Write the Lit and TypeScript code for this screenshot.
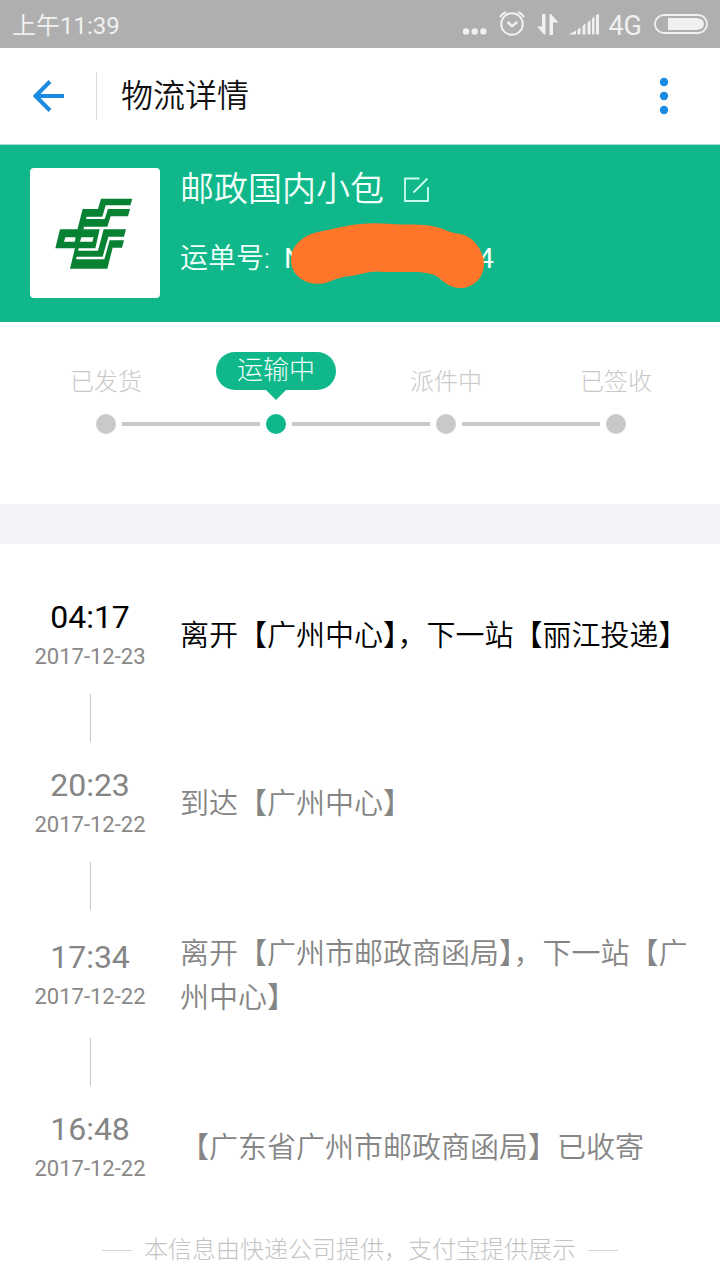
import { LitElement, html, css, nothing } from "lit";
import { customElement, property } from "lit/decorators.js";

interface TrackEvent {
  time: string;
  date: string;
  text: string;
}

const STEPS = ["已发货", "运输中", "派件中", "已签收"];
const ACTIVE_STEP = 1;

const EVENTS: TrackEvent[] = [
  { time: "04:17", date: "2017-12-23", text: "离开【广州中心】，下一站【丽江投递】" },
  { time: "20:23", date: "2017-12-22", text: "到达【广州中心】" },
  { time: "17:34", date: "2017-12-22", text: "离开【广州市邮政商函局】，下一站【广州中心】" },
  { time: "16:48", date: "2017-12-22", text: "【广东省广州市邮政商函局】已收寄" },
];

@customElement("status-bar")
export class StatusBar extends LitElement {
  static styles = css`
    :host {
      display: flex;
      align-items: center;
      justify-content: space-between;
      height: 48px;
      padding: 0 12px;
      background: #afafaf;
      color: #f0f0f0;
      font-size: 24px;
      line-height: 48px;
    }
    .clock {
      padding-top: 4px;
    }
    .icons {
      display: flex;
      align-items: center;
    }
    .icons svg {
      display: block;
    }
    .network {
      padding: 4px 12px 0 8px;
      font-size: 27px;
    }
  `;

  render() {
    return html`
      <span class="clock">上午11:39</span>
      <div class="icons">
        <svg width="146" height="48" viewBox="0 0 146 48" fill="#f0f0f0" aria-hidden="true">
          <circle cx="12" cy="31.5" r="3.2" />
          <circle cx="20.700" cy="31.5" r="3.2" />
          <circle cx="29.400" cy="31.5" r="3.2" />
          <g fill="none" stroke="#f0f0f0" stroke-width="2">
            <circle cx="58" cy="24" r="10.8" />
            <path d="M53.5 22l4.500 4.2 5.2-4.200" stroke-width="2.4" />
            <path d="M46 17q2-3.500 6-5M70 17q-2-3.500-6-5" stroke-width="2.200" />
          </g>
          <path d="M88 14h3.500v20.500h-1.500L83 26.500h5zM99 35h-3.500V14h1.500l7.500 8.500H99z" />
          <path d="M114.500 34.500l7.500-4v4zM123.500 29.500l3-2v7h-3zM128.500 26l3-2.500v11h-3zM133.500 22.500l3-2.500v14.500h-3zM138 18.500l2.500-2v18H138zM142 15.500l3-2v21h-3z" />
        </svg>
        <span class="network">4G</span>
        <svg width="54" height="20" viewBox="0 0 54 20" aria-hidden="true">
          <rect x="1" y="1" width="52" height="18" rx="9" fill="none" stroke="#f0f0f0" stroke-width="1.800" />
          <path d="M14 4h29q7 1 7 6t-7 6H14z" fill="#f0f0f0" />
        </svg>
      </div>
    `;
  }
}

@customElement("title-bar")
export class TitleBar extends LitElement {
  static styles = css`
    :host {
      display: flex;
      align-items: center;
      height: 96px;
      background: #fff;
      border-bottom: 1px solid #a6dccb;
    }
    button {
      display: flex;
      align-items: center;
      justify-content: center;
      width: 96px;
      height: 96px;
      padding: 0;
      border: 0;
      background: none;
    }
    .more {
      width: 112px;
    }
    h1 {
      flex: 1;
      margin: 0;
      padding-left: 24px;
      border-left: 1px solid #dcdcdc;
      color: #111;
      font-size: 32px;
      font-weight: 350;
      line-height: 48px;
    }
  `;

  render() {
    return html`
      <button aria-label="返回">
        <svg width="32" height="32" viewBox="0 0 32 32" fill="none" stroke="#1a8be0" stroke-width="4" aria-hidden="true">
          <path d="M18 1.500L3.500 16 18 30.500M3.500 16H32" />
        </svg>
      </button>
      <h1>物流详情</h1>
      <button class="more" aria-label="更多">
        <svg width="10" height="38" viewBox="0 0 10 38" fill="#1a8be0" aria-hidden="true">
          <circle cx="5" cy="5" r="4.200" />
          <circle cx="5" cy="19" r="4.200" />
          <circle cx="5" cy="33" r="4.200" />
        </svg>
      </button>
    `;
  }
}

@customElement("parcel-card")
export class ParcelCard extends LitElement {
  static styles = css`
    :host {
      display: flex;
      gap: 20px;
      padding: 23px 30px 24px;
      background: #0fb78a;
      color: #f2fffb;
    }
    .logo {
      flex: none;
      width: 130px;
      height: 130px;
      border-radius: 4px;
      background: #fff;
    }
    .logo svg {
      display: block;
    }
    .info {
      flex: 1;
    }
    .carrier {
      display: flex;
      align-items: center;
      gap: 18px;
      padding-top: 1px;
      font-size: 34px;
      line-height: 40px;
    }
    h2 {
      margin: 0;
      font-size: 34px;
      font-weight: inherit;
    }
    .edit {
      display: flex;
      padding: 0;
      border: 0;
      background: none;
    }
    .number {
      display: flex;
      gap: 14px;
      padding-top: 30px;
      font-size: 28px;
      font-weight: 400;
      line-height: 40px;
    }
    .caption {
      font-weight: 350;
    }
    .code {
      position: relative;
      display: flex;
      justify-content: space-between;
      width: 210px;
    }
    .scribble {
      position: absolute;
      left: 6px;
      top: -17px;
    }
  `;

  render() {
    return html`
      <div class="logo">
        <svg width="130" height="130" viewBox="0 0 390 390" fill="#078132" role="img" aria-label="中国邮政">
          <g transform="translate(60 66)">
            <path d="M98 57H144L153 26H247L241 46H167L157 80H110L108 87H164L174 57H240L234 79H182L172 110H102L100 119H82z" />
            <path fill-rule="evenodd" d="M30 118H149L136 175H16zM46 142L42 155H74L77 142zM94 142L90 155H127L131 142z" />
            <path d="M75 174H86L84 182H144L161 118H228L222 140H175L158 200H80L78 208H163L179 151H222L216 173H188L172 236H60z" />
          </g>
        </svg>
      </div>
      <div class="info">
        <div class="carrier">
          <h2>邮政国内小包</h2>
          <button class="edit" aria-label="编辑">
            <svg width="28" height="28" viewBox="0 0 28 28" fill="none" stroke="#c9fff0" stroke-width="1.800" aria-hidden="true">
              <path d="M17.500 3.500H3V26H26V12M11.500 17.500L25.500 3.500" />
            </svg>
          </button>
        </div>
        <div class="number">
          <span class="caption">运单号:</span>
          <span class="code">
            <span>N</span><span>4</span>
            <svg class="scribble" width="196" height="68" viewBox="0 0 196 68" fill="#ff7529" aria-hidden="true">
              <path d="M1 38C1 22 15 13 28 10C43 7 58 3 70 2C85 0 99 2 112 2.500C128 2 141 3 150 6C158 9 162 11 170 12C184 14 194 30 194 42C194 56 183 66 171 66C161 66 155 61 149 56C143 51 136 51 128 50L94 50C82 48 72 52 61 54C46 55 42 60 33 61.500C14 64 1 52 1 38z" />
            </svg>
          </span>
        </div>
      </div>
    `;
  }
}

@customElement("progress-steps")
export class ProgressSteps extends LitElement {
  static styles = css`
    :host {
      display: block;
      padding: 30px 19px 70px 21px;
      background: #fff;
      border-bottom: 40px solid #f3f3fa;
    }
    ol {
      display: grid;
      grid-template-columns: repeat(4, 1fr);
      margin: 0;
      padding: 0;
      list-style: none;
    }
    li {
      display: flex;
      flex-direction: column;
      align-items: center;
      color: #c9c9c9;
      font-size: 24px;
    }
    .label {
      height: 62px;
      line-height: 60px;
    }
    .current {
      position: relative;
      height: 38px;
      margin-bottom: 24px;
      padding: 0 21px;
      border-radius: 19px;
      background: #0fb78a;
      color: #f2fffb;
      font-size: 26px;
      line-height: 36px;
    }
    .current::after {
      content: "";
      position: absolute;
      left: 50%;
      top: 100%;
      margin-left: -10px;
      border: 10px solid transparent;
      border-top-color: #0fb78a;
      border-bottom: 0;
    }
    .track {
      display: flex;
      align-items: center;
      gap: 6px;
      width: 100%;
    }
    .line {
      flex: 1;
      height: 4px;
      background: #c9c9c9;
    }
    .hidden {
      visibility: hidden;
    }
    .dot {
      width: 20px;
      height: 20px;
      border-radius: 50%;
      background: #c9c9c9;
    }
    .on {
      background: #0fb78a;
    }
  `;

  render() {
    const last = STEPS.length - 1;
    return html`
      <ol>
        ${STEPS.map(
          (step, i) => html`
            <li aria-current=${i === ACTIVE_STEP ? "step" : nothing}>
              <span class=${i === ACTIVE_STEP ? "current" : "label"}>${step}</span>
              <div class="track">
                <span class="line ${i === 0 ? "hidden" : ""}"></span>
                <span class="dot ${i === ACTIVE_STEP ? "on" : ""}"></span>
                <span class="line ${i === last ? "hidden" : ""}"></span>
              </div>
            </li>
          `
        )}
      </ol>
    `;
  }
}

@customElement("track-list")
export class TrackList extends LitElement {
  @property({ attribute: false }) events: TrackEvent[] = [];

  static styles = css`
    :host {
      display: block;
      padding: 52px 30px 0 0;
      background: #fff;
    }
    ol {
      margin: 0;
      padding: 0;
      list-style: none;
    }
    li {
      display: grid;
      grid-template-columns: 180px 1fr;
      align-items: center;
      color: #858585;
    }
    .latest {
      color: #000;
    }
    .row-time {
      text-align: center;
      font-weight: 400;
    }
    .time {
      display: block;
      font-size: 32px;
      line-height: 42px;
    }
    .date {
      display: block;
      color: #888;
      font-size: 22px;
      line-height: 38px;
    }
    p {
      margin: 0;
      font-size: 29px;
      font-weight: 350;
      line-height: 44px;
    }
    .link {
      justify-self: center;
      width: 1px;
      height: 48px;
      margin: 18px 0 22px;
      background: #c4c4c4;
    }
  `;

  render() {
    return html`
      <ol>
        ${this.events.map(
          (e, i) => html`
            <li class=${i === 0 ? "latest" : ""}>
              <div class="row-time">
                <time class="time">${e.time}</time>
                <span class="date">${e.date}</span>
              </div>
              <p>${e.text}</p>
              ${i < this.events.length - 1 ? html`<span class="link"></span>` : nothing}
            </li>
          `
        )}
      </ol>
    `;
  }
}

@customElement("app-root")
export class AppRoot extends LitElement {
  static styles = css`
    :host {
      display: block;
      min-height: 100vh;
      background: #fff;
      font-family: Roboto, "Noto Sans CJK SC", sans-serif;
      font-weight: 350;
    }
    status-bar {
      font-weight: 400;
    }
    progress-steps {
      font-weight: 300;
    }
    footer {
      display: flex;
      align-items: center;
      justify-content: center;
      gap: 12px;
      padding: 44px 0 0;
      color: #c4c4c4;
      font-size: 24px;
      font-weight: 300;
      line-height: 36px;
    }
    .rule {
      width: 30px;
      height: 1px;
      background: #d4d4d4;
    }
  `;

  render() {
    return html`
      <status-bar></status-bar>
      <title-bar></title-bar>
      <parcel-card></parcel-card>
      <progress-steps></progress-steps>
      <track-list .events=${EVENTS}></track-list>
      <footer>
        <span class="rule"></span>
        <span>本信息由快递公司提供，支付宝提供展示</span>
        <span class="rule"></span>
      </footer>
    `;
  }
}
